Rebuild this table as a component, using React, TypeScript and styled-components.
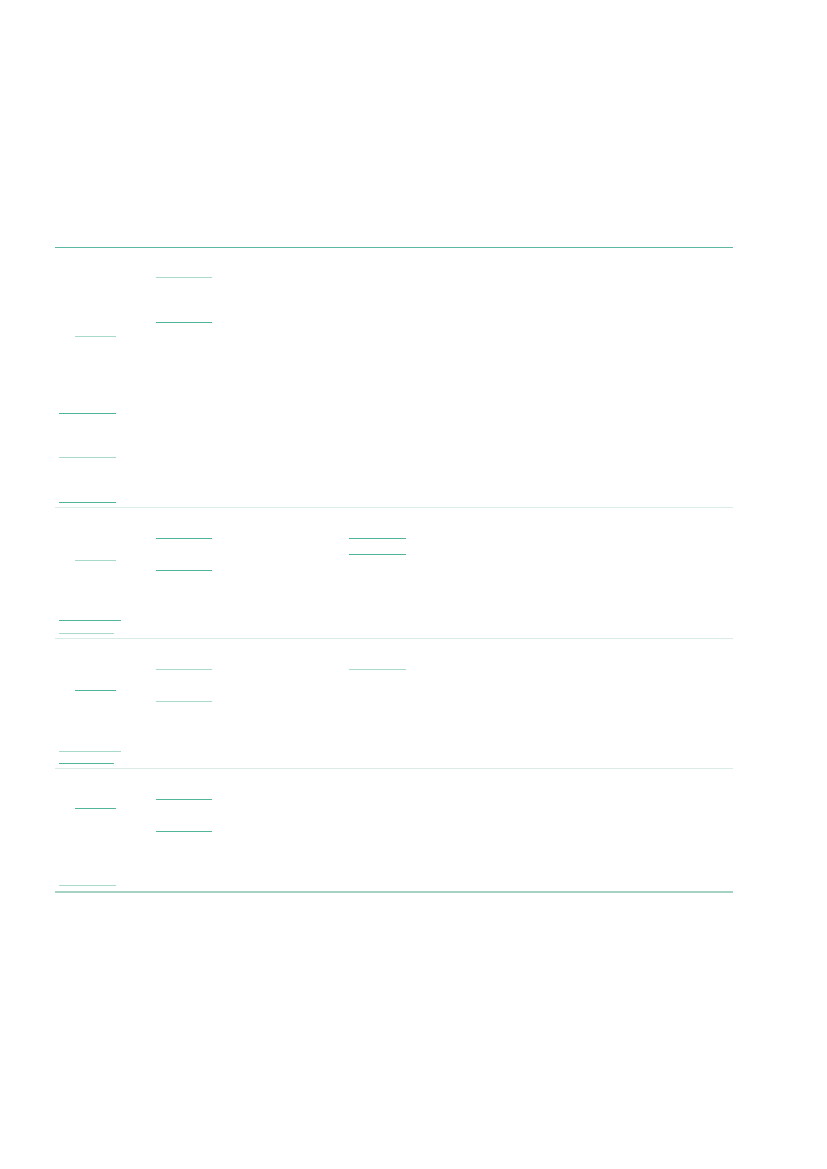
import React from 'react';
import styled, { createGlobalStyle } from 'styled-components';

const GlobalStyle = createGlobalStyle`
  html, body {
    margin: 0;
    padding: 0;
    background: #ffffff;
    font-family: "Liberation Sans", Arial, sans-serif;
  }
`;

const Page = styled.div`
  width: 827px;
  height: 1169px;
  padding-top: 247px;
  padding-left: 55px;
  box-sizing: border-box;
`;

const Table = styled.div`
  width: 678px;
  border-top: 1px solid #5cb8a2;
  border-bottom: 2px solid #a6d2c4;
`;

const Row = styled.div<{ $height: number; $last?: boolean }>`
  display: grid;
  grid-template-columns: 101px 193px 1fr;
  height: ${p => p.$height}px;
  box-sizing: border-box;
  border-bottom: ${p => (p.$last ? 'none' : '1px solid #d9ece6')};
`;

const Cell = styled.div`
  display: flex;
  flex-direction: column;
  align-items: flex-start;
`;

const Mark = styled.span<{ $gap: number; $indent: number; $width: number; $light?: boolean }>`
  display: block;
  height: 1px;
  margin-top: ${p => p.$gap}px;
  margin-left: ${p => p.$indent}px;
  width: ${p => p.$width}px;
  background: ${p => (p.$light ? '#a9d9ca' : '#52b49a')};
`;

type M = { y: number; x: number; w: number; light?: boolean };
type Sec = { h: number; cols: M[][] };

// y = offset from top of the row, x = offset from left of the cell
const sections: Sec[] = [
  {
    h: 260,
    cols: [
      [
        { y: 88, x: 20, w: 41, light: true },
        { y: 165, x: 4, w: 57 },
        { y: 209, x: 4, w: 57, light: true },
        { y: 254, x: 4, w: 57 },
      ],
      [
        { y: 29, x: 0, w: 56, light: true },
        { y: 74, x: 0, w: 56 },
      ],
      [],
    ],
  },
  {
    h: 131,
    cols: [
      [
        { y: 52, x: 20, w: 41, light: true },
        { y: 112, x: 4, w: 62 },
        { y: 125, x: 4, w: 55, light: true },
      ],
      [
        { y: 30, x: 0, w: 56 },
        { y: 62, x: 0, w: 56 },
      ],
      [
        { y: 30, x: 0, w: 57 },
        { y: 46, x: 0, w: 57 },
      ],
    ],
  },
  {
    h: 130,
    cols: [
      [
        { y: 51, x: 20, w: 41 },
        { y: 112, x: 4, w: 62, light: true },
        { y: 124, x: 4, w: 55 },
      ],
      [
        { y: 30, x: 0, w: 56, light: true },
        { y: 62, x: 0, w: 56, light: true },
      ],
      [{ y: 30, x: 0, w: 57, light: true }],
    ],
  },
  {
    h: 122,
    cols: [
      [
        { y: 39, x: 20, w: 41 },
        { y: 116, x: 4, w: 57, light: true },
      ],
      [
        { y: 30, x: 0, w: 56 },
        { y: 62, x: 0, w: 56 },
      ],
      [],
    ],
  },
];

const App: React.FC = () => (
  <>
    <GlobalStyle />
    <Page>
      <Table>
        {sections.map((sec, si) => (
          <Row key={si} $height={sec.h} $last={si === sections.length - 1}>
            {sec.cols.map((marks, ci) => (
              <Cell key={ci}>
                {marks.map((m, mi) => {
                  const prev = mi === 0 ? 0 : marks[mi - 1].y + 1;
                  return (
                    <Mark
                      key={mi}
                      $gap={m.y - prev}
                      $indent={m.x}
                      $width={m.w}
                      $light={m.light}
                    />
                  );
                })}
              </Cell>
            ))}
          </Row>
        ))}
      </Table>
    </Page>
  </>
);

export default App;
